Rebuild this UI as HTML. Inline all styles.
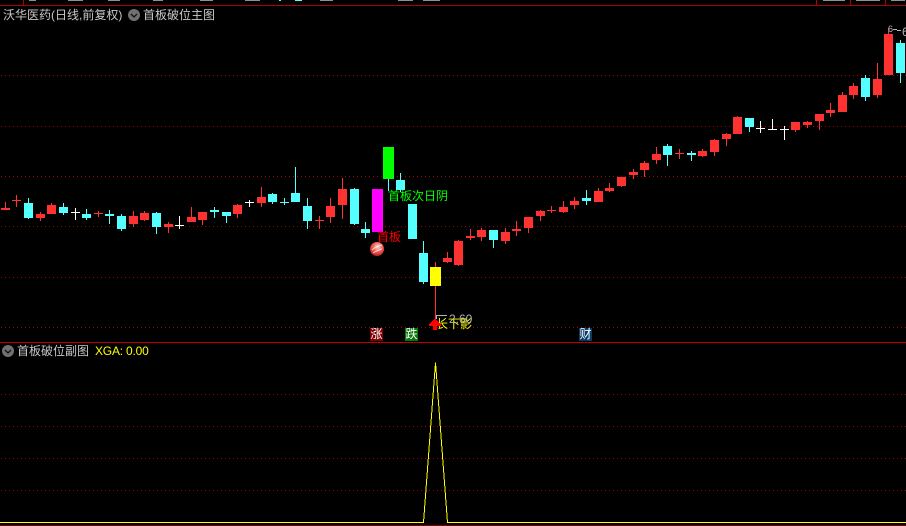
<!DOCTYPE html>
<html>
<head>
<meta charset="utf-8">
<title>沃华医药</title>
<style>
html,body{margin:0;padding:0;background:#000;}
#p{position:relative;width:906px;height:526px;overflow:hidden;background:#000;font-family:"WenQuanYi Zen Hei","Liberation Sans","Noto Sans CJK SC",sans-serif;font-size:12px;line-height:12px;}
svg{position:absolute;left:0;top:0;}
.t{position:absolute;white-space:nowrap;}
.b{position:absolute;width:13px;height:13px;color:#fff;text-align:center;line-height:13px;}
</style>
</head>
<body>
<div id="p">
<svg width="906" height="526" viewBox="0 0 906 526" shape-rendering="crispEdges">
<path id="grid" fill="#a00000"/>
<path fill="#909090" d="M29 0h7v1h-7z M68 0h15v1h-15z M108 0h12v1h-12z M153 0h10v1h-10z M200 0h13v1h-13z M245 0h15v1h-15z M320 0h13v1h-13z M398 0h15v1h-15z M423 0h17v1h-17z M823 0h22v1h-22z M856 0h24v1h-24z M891 0h14v1h-14z"/>
<path fill="#54ffff" d="M279 0h2v1h-2z M295 0h7v1h-7z"/>
<path fill="#b00000" d="M0 5h906v1H0z M23 0h1v5h-1z M816 0h1v5h-1z M850 0h1v5h-1z M885 0h1v5h-1z"/>
<path id="red" fill="#ff3232"/>
<path id="cyan" fill="#54ffff"/>
<path id="white" fill="#ffffff"/>
<rect x="372" y="189" width="11" height="43" fill="#ff00ff"/>
<rect x="383" y="147" width="11" height="32" fill="#00ff00"/>
<rect x="430" y="267" width="11" height="19" fill="#ffff00"/>
<path fill="#b4b4b4" d="M436 315h11v1h-11z M436 316h1v3h-1z M893 29h4v1h-4z M897 30h4v1h-4z"/>
<path fill="#c00000" d="M0 342h906v1H0z"/>
<path fill="#800000" d="M0 525h906v1H0z"/>
<polyline points="0,522.5 423.5,522.5 435.5,362.5 447.5,522.5 906,522.5" fill="none" stroke="#ffff00" stroke-width="1"/>
</svg>
<svg width="906" height="526" viewBox="0 0 906 526">
<defs>
<radialGradient id="g" cx="0.55" cy="0.35" r="0.75">
<stop offset="0" stop-color="#ffd8d0"/><stop offset="0.45" stop-color="#f06058"/><stop offset="1" stop-color="#a80c10"/>
</radialGradient>
</defs>
<circle cx="377" cy="249" r="7" fill="url(#g)"/>
<path d="M372 250c3-3 6-4 10-5M373 253c3-2 6-3 9-4" stroke="#fff" stroke-width="1" fill="none" opacity=".75"/>
<circle cx="134" cy="15" r="6" fill="#707070"/>
<path d="M131 14l3 3 3-3" stroke="#111" stroke-width="1.3" fill="none"/>
<circle cx="8" cy="351" r="6" fill="#707070"/>
<path d="M5 350l3 3 3-3" stroke="#111" stroke-width="1.3" fill="none"/>
</svg>
<div class="t" style="left:3px;top:9px;color:#c8c8c8;">沃华医药(日线,前复权)</div>
<div class="t" style="left:143px;top:9px;color:#c8c8c8;">首板破位主图</div>
<div class="t" style="left:17px;top:345px;color:#c8c8c8;">首板破位副图</div>
<div class="t" style="left:95px;top:345px;color:#ffff00;font-family:'Liberation Sans',sans-serif;letter-spacing:-0.2px;">XGA: 0.00</div>
<div class="t" style="left:388px;top:190px;color:#00ff00;">首板次日阴</div>
<div class="t" style="left:377px;top:231px;color:#ff0000;">首板</div>
<div class="t" style="left:436px;top:318px;color:#ffff00;">长下影</div>
<div class="t" style="left:449px;top:313px;color:#b4b4b4;font-family:'Liberation Sans',sans-serif;">2.60</div>
<div class="t" style="left:888px;top:25px;color:#b4b4b4;font-family:'Liberation Sans',sans-serif;font-size:9px;line-height:9px;">6</div>
<div class="t" style="left:902px;top:26px;color:#b4b4b4;font-family:'Liberation Sans',sans-serif;">6</div>
<div class="b" style="left:370px;top:328px;background:#800000;">涨</div>
<div class="b" style="left:405px;top:328px;background:#087808;">跌</div>
<div class="b" style="left:579px;top:328px;background:#0a3a66;">财</div>
<svg width="906" height="526" viewBox="0 0 906 526" shape-rendering="crispEdges">
<path fill="#ff0000" d="M434 319h2v1h1v1h1v1h1v1h1v1h1v2h-4v4h-4v-4h-4v-2h1v-1h1v-1h1v-1h1v-1h1z"/>
</svg>
</div>
<script>
var R="5 202 210 208 210,16 195 207 200 201,40 212 221 214 218,51 203 214 205 214,98 211 217 213 214,133 211 227 216 224,144 211 221 213 220,168 222 233 224 227,191 207 222 217 222,202 212 225 212 220,237 204 218 205 214,261 187 207 197 203,319 216 229 220 221,330 198 223 206 217,342 178 219 189 205,447 252 263 258 262,458 240 266 241 265,470 229 240 236 238,481 228 241 230 237,505 228 244 232 241,516 221 236 229 231,528 217 233 217 228,540 210 221 211 216,551 206 213 210 211,563 201 213 207 212,574 197 209 201 205,598 188 202 191 202,609 183 192 188 191,621 177 187 177 186,633 169 179 172 175,644 161 177 163 170,656 147 164 154 160,679 149 159 153 154,702 149 157 151 156,714 139 156 140 152,726 133 146 134 139,737 116 134 117 134,795 122 132 122 130,807 121 128 122 125,819 114 130 114 121,830 103 117 110 113,842 92 112 95 112,853 83 99 86 95,877 63 98 79 95,888 28 75 34 75,435 262 320 0 0";
var C="28 198 219 203 218,63 203 215 207 213,86 209 220 214 218,109 210 224 214 216,121 214 231 216 229,156 212 234 213 227,214 207 218 210 212,226 212 223 212 216,272 193 204 194 202,284 198 205 202 203,295 167 202 193 202,307 198 229 206 221,354 188 225 189 224,365 222 238 229 233,388 179 191 0 0,400 173 192 180 190,412 204 239 204 239,423 241 284 253 282,493 230 248 230 240,586 190 205 198 201,667 144 166 146 155,691 151 161 153 155,749 118 132 118 127,865 75 101 78 97,900 40 83 43 73";
var W="75 208 220 212 213,179 216 229 225 226,249 200 207 202 203,760 121 133 128 129,772 119 130 129 130,784 126 140 129 130";
function build(s){return s.split(",").map(function(x){var v=x.split(" ").map(Number),c=v[0];
var d="M"+c+" "+v[1]+"h1V"+v[2]+"h-1z";
if(v[3])d+="M"+(c-4)+" "+v[3]+"h9V"+v[4]+"h-9z";return d;}).join("");}
document.getElementById("red").setAttribute("d",build(R));
document.getElementById("cyan").setAttribute("d",build(C));
document.getElementById("white").setAttribute("d",build(W));
var g="";[75,126,176,226,277,327,394,426,458,490].forEach(function(y){for(var x=1;x<906;x+=4)g+="M"+x+" "+y+"h1v1h-1z";});
document.getElementById("grid").setAttribute("d",g);
</script>
</body>
</html>
